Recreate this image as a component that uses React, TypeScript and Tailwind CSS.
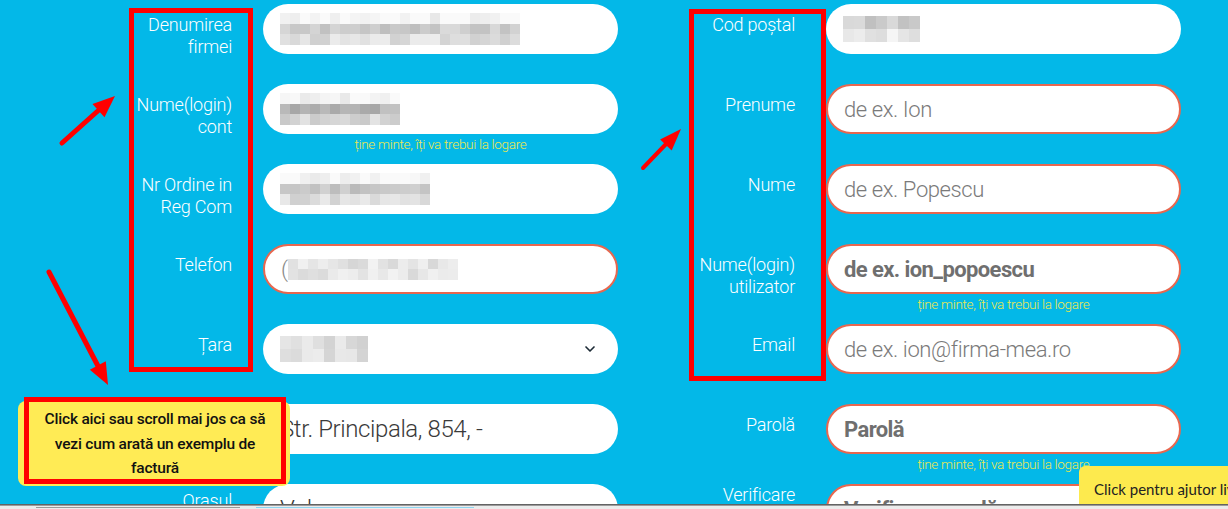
import React from "react";
import { ChevronDown } from "lucide-react";

const LBL = { fontFamily: 'Roboto, "DejaVu Sans Condensed", sans-serif', fontWeight: 300, letterSpacing: "-0.2px" };
const INP = { fontFamily: 'Roboto, "DejaVu Sans Condensed", sans-serif', fontWeight: 300, letterSpacing: "-0.4px" };
const INPB = { fontFamily: 'Roboto, "DejaVu Sans Condensed", sans-serif', fontWeight: 700, letterSpacing: "-0.6px" };

function rng(seed: number) {
  let s = seed;
  return () => {
    s = (s * 9301 + 49297) % 233280;
    return s / 233280;
  };
}

function Mosaic({ cols, bases, seed, cell = 10, rowH = 10.5 }: { cols: number; bases: number[]; seed: number; cell?: number; rowH?: number }) {
  const r = rng(seed);
  return (
    <div className="flex flex-col">
      {bases.map((b, ri) => (
        <div key={ri} className="flex">
          {Array.from({ length: cols }).map((_, ci) => {
            const v = Math.round(Math.min(250, b + (r() - 0.5) * 30));
            return <div key={ci} style={{ width: cell, height: rowH, backgroundColor: `rgb(${v},${v},${v})` }} />;
          })}
        </div>
      ))}
    </div>
  );
}

type RowProps = {
  label: React.ReactNode;
  labelPt?: number;
  border?: boolean;
  hint?: boolean;
  children?: React.ReactNode;
};

function Row({ label, labelPt = 10, border, hint, children }: RowProps) {
  return (
    <div className="flex h-[80px] shrink-0">
      <div className="w-[100px] text-right text-white text-[18px] leading-[22px]" style={{ ...LBL, paddingTop: labelPt }}>
        {label}
      </div>
      <div className="ml-[31px] w-[355px]">
        <div
          className={
            "h-[50px] rounded-full bg-white flex items-center pr-[20px] overflow-hidden " +
            (border ? "border-2 border-[#e8674f] pl-[16px]" : "pl-[17px]")
          }
        >
          {children}
        </div>
        {hint && (
          <div
            className="mt-[2px] text-center text-[13.5px] leading-[16px] text-[#eee84c] whitespace-nowrap"
            style={{ fontFamily: "Roboto, sans-serif", fontWeight: 300, letterSpacing: "-0.3px" }}
          >
            ține minte, îți va trebui la logare
          </div>
        )}
      </div>
    </div>
  );
}

const ph = "text-[22px] text-[#7a7a7a] whitespace-nowrap";
const phb = "text-[22px] text-[#6f6f6f] whitespace-nowrap";

export default function App() {
  return (
    <div className="relative w-[1228px] h-[509px] overflow-hidden bg-[#03b8e8]">
      <div className="flex pt-[4px]">
        {/* Left column */}
        <div className="ml-[132px] flex flex-col">
          <Row label={<>Denumirea<br />firmei</>}>
            <Mosaic cols={24} bases={[246, 205, 222]} seed={3} />
          </Row>
          <Row label={<>Nume(login)<br />cont</>} hint>
            <Mosaic cols={12} bases={[246, 180, 212]} seed={7} />
          </Row>
          <Row label={<>Nr Ordine in<br />Reg Com</>}>
            <Mosaic cols={15} bases={[246, 200, 222]} seed={11} />
          </Row>
          <Row label="Telefon" border>
            <span className="text-[22px] text-[#888]" style={INP}>(</span>
            <Mosaic cols={17} bases={[228, 228]} seed={5} />
          </Row>
          <Row label="Țara">
            <div className="flex-1">
              <div className="w-[88px]">
                <Mosaic cols={8} bases={[222, 225]} seed={13} cell={11} rowH={13} />
              </div>
            </div>
            <ChevronDown size={16} strokeWidth={2.5} className="text-[#1d2b36]" />
          </Row>
          <Row label="">
            <span className="text-[24px] text-[#3a3a3a] whitespace-nowrap" style={INP}>Str. Principala, 854, -</span>
          </Row>
          <Row label="Orasul" labelPt={6}>
            <span className="text-[24px] text-[#3a3a3a]" style={INP}>Vulcan</span>
          </Row>
        </div>

        {/* Right column */}
        <div className="ml-[77px] flex flex-col">
          <Row label="Cod poștal">
            <Mosaic cols={7} bases={[205, 232]} seed={17} cell={11} rowH={13} />
          </Row>
          <Row label="Prenume" border>
            <span className={ph} style={INP}>de ex. Ion</span>
          </Row>
          <Row label="Nume" border>
            <span className={ph} style={INP}>de ex. Popescu</span>
          </Row>
          <Row label={<>Nume(login)<br />utilizator</>} border hint>
            <span className={phb} style={INPB}>de ex. ion_popoescu</span>
          </Row>
          <Row label="Email" border>
            <span className={ph} style={INP}>de ex. ion@firma-mea.ro</span>
          </Row>
          <Row label="Parolă" border hint>
            <span className={phb} style={INPB}>Parolă</span>
          </Row>
          <Row label={<>Verificare<br />parolă</>} labelPt={-4} border>
            <span className={phb} style={INPB}>Verificare parolă</span>
          </Row>
        </div>
      </div>

      {/* Red highlight boxes */}
      <div className="absolute left-[129px] top-[8px] w-[124px] h-[364px] border-[5px] border-[#ff0000]" />
      <div className="absolute left-[689px] top-[9px] w-[137px] h-[372px] border-[5px] border-[#ff0000]" />

      {/* Arrows */}
      <svg className="absolute left-0 top-0" width="1228" height="509" viewBox="0 0 1228 509">
        <line x1="62" y1="143" x2="100" y2="109" stroke="#f00" strokeWidth="5" strokeLinecap="round" />
        <polygon points="115,96 104.5,117.3 92.5,103.9" fill="#f00" />
        <line x1="49" y1="272" x2="99" y2="368" stroke="#f00" strokeWidth="5" strokeLinecap="round" />
        <polygon points="108,385 105.8,361.3 89.8,369.7" fill="#f00" />
        <line x1="643" y1="168" x2="667" y2="143" stroke="#f00" strokeWidth="4" strokeLinecap="round" />
        <polygon points="681,129 671.7,150.4 660.1,139.4" fill="#f00" />
      </svg>

      {/* Yellow note */}
      <div className="absolute left-[18px] top-[401px] w-[272px] h-[85px] rounded-[8px] bg-[#ffeb55]" />
      <div className="absolute left-[24px] top-[397px] w-[262px] h-[87px] border-[5px] border-[#ff0000] flex flex-col items-center pt-[5px]">
        <div
          className="text-center text-[15.5px] leading-[24.5px] text-[#111] whitespace-nowrap"
          style={{ fontFamily: "Roboto, sans-serif", fontWeight: 500, letterSpacing: "-0.2px" }}
        >
          Click aici sau scroll mai jos ca să
          <br />
          vezi cum arată un exemplu de
          <br />
          factură
        </div>
      </div>

      {/* Help tab */}
      <div className="absolute left-[1079px] top-[466px] w-[160px] h-[50px] rounded-tl-[6px] bg-[#fdea4e] pl-[15px] pt-[11px]">
        <span className="text-[15px] text-[#222] whitespace-nowrap" style={{ fontFamily: "Lato, sans-serif" }}>
          Click pentru ajutor live
        </span>
      </div>

      {/* Bottom bar */}
      <div className="absolute left-0 bottom-0 w-full h-[5px] bg-[#ececec]">
        <div className="h-[2px] bg-gradient-to-b from-[#4a4a4a] to-[#b8b8b8]" />
        <div className="mt-[1px] ml-[36px] flex">
          <div className="w-[204px] h-[1px] bg-[#9a9a9a]" />
          <div className="ml-[16px] w-[218px] h-[1px] bg-[#8fd3ef]" />
        </div>
      </div>
    </div>
  );
}
